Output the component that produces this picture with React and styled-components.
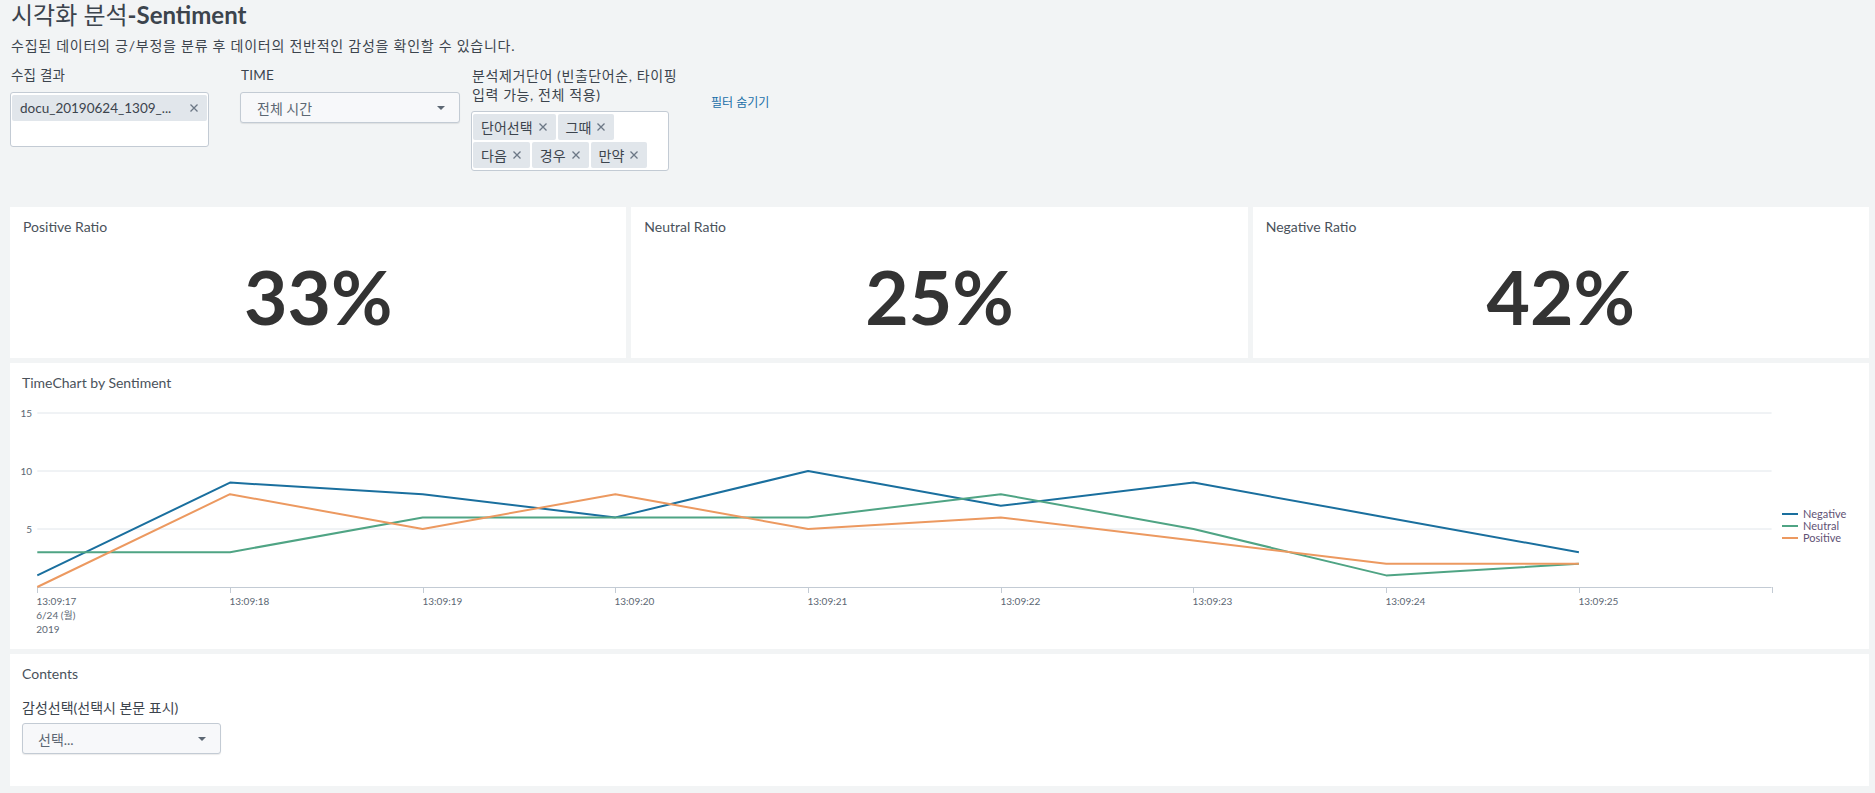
import React from "react";
import styled, { createGlobalStyle } from "styled-components";

const GlobalStyle = createGlobalStyle`
    html, body {
        margin: 0;
        padding: 0;
        background: #f2f4f5;
    }
    body {
        font-family: Lato, "Noto Sans CJK KR", sans-serif;
        color: #3c444d;
    }
`;

const times = [
    "13:09:17",
    "13:09:18",
    "13:09:19",
    "13:09:20",
    "13:09:21",
    "13:09:22",
    "13:09:23",
    "13:09:24",
    "13:09:25",
];

const series = [
    { name: "Negative", color: "#1a6f9e", values: [1, 9, 8, 6, 10, 7, 9, 6, 3] },
    { name: "Neutral", color: "#4fa484", values: [3, 3, 6, 6, 6, 8, 5, 1, 2] },
    { name: "Positive", color: "#ec9960", values: [0, 8, 5, 8, 5, 6, 4, 2, 2] },
];

const stats = [
    { title: "Positive Ratio", value: "33%" },
    { title: "Neutral Ratio", value: "25%" },
    { title: "Negative Ratio", value: "42%" },
];

const words = ["단어선택", "그때", "다음", "경우", "만약"];

// chart geometry (svg coords, svg starts 12px from panel edge)
const X0 = 25.3;
const STEP = 192.7;
const X_END = X0 + STEP * 9;
const yOf = (v) => 184 - v * 11.6;

const CloseIcon = () => (
    <svg width="10" height="10" viewBox="0 0 10 10">
        <path d="M1.5 1.5 L8.5 8.5 M8.5 1.5 L1.5 8.5" stroke="#6b7785" strokeWidth="1.3" fill="none" />
    </svg>
);

const TimeChart = () => (
    <svg width="1845" height="240" viewBox="0 0 1845 240">
        {[5, 10, 15].map((v) => (
            <g key={v}>
                <line x1={X0} x2={X_END} y1={yOf(v)} y2={yOf(v)} stroke="#e1e6eb" strokeWidth="1" />
                <AxisText x="20" y={yOf(v) + 3.5} textAnchor="end">
                    {v}
                </AxisText>
            </g>
        ))}
        <line x1={X0} x2={X_END} y1={184.5} y2={184.5} stroke="#c3cbd4" strokeWidth="1" />
        {times.concat([""]).map((t, i) => {
            const x = Math.round(X0 + STEP * i) + 0.5;
            return (
                <g key={i}>
                    <line x1={x} x2={x} y1={184} y2={190} stroke="#c3cbd4" strokeWidth="1" />
                    {t && (
                        <AxisText x={x - 1} y="202">
                            {t}
                        </AxisText>
                    )}
                </g>
            );
        })}
        <AxisText x={X0 - 1} y="216">
            6/24 (월)
        </AxisText>
        <AxisText x={X0 - 1} y="230">
            2019
        </AxisText>
        {series.map((s) => (
            <polyline
                key={s.name}
                fill="none"
                stroke={s.color}
                strokeWidth="2"
                strokeLinejoin="round"
                points={s.values.map((v, i) => `${X0 + STEP * i},${yOf(v)}`).join(" ")}
            />
        ))}
        {series.map((s, i) => (
            <g key={s.name}>
                <line x1="1770" x2="1786" y1={111 + i * 12} y2={111 + i * 12} stroke={s.color} strokeWidth="2" />
                <LegendText x="1791" y={115 + i * 12}>
                    {s.name}
                </LegendText>
            </g>
        ))}
    </svg>
);

export default function App() {
    return (
        <>
            <GlobalStyle />
            <Page>
                <Header>
                    <Title>
                        <span>시각화 분석</span>
                        <strong>-Sentiment</strong>
                    </Title>
                    <Description>수집된 데이터의 긍/부정을 분류 후 데이터의 전반적인 감성을 확인할 수 있습니다.</Description>
                </Header>

                <FilterRow>
                    <Field width={199}>
                        <Label>수집 결과</Label>
                        <MultiBox height={55}>
                            <Tag wide>
                                <span>docu_20190624_1309_...</span>
                                <CloseIcon />
                            </Tag>
                        </MultiBox>
                    </Field>
                    <Field width={220} gap={31}>
                        <Label>TIME</Label>
                        <Dropdown>
                            <span>전체 시간</span>
                            <Caret />
                        </Dropdown>
                    </Field>
                    <Field width={198} gap={11}>
                        <Label spaced>
                            분석제거단어 (빈출단어순, 타이핑
                            <br />
                            입력 가능, 전체 적용)
                        </Label>
                        <MultiBox height={60}>
                            {words.map((w) => (
                                <Tag key={w}>
                                    <span>{w}</span>
                                    <CloseIcon />
                                </Tag>
                            ))}
                        </MultiBox>
                    </Field>
                    <HideLink>필터 숨기기</HideLink>
                </FilterRow>

                <StatRow>
                    {stats.map((s) => (
                        <Panel key={s.title}>
                            <PanelTitle>{s.title}</PanelTitle>
                            <BigValue>{s.value}</BigValue>
                        </Panel>
                    ))}
                </StatRow>

                <ChartPanel>
                    <PanelTitle>TimeChart by Sentiment</PanelTitle>
                    <ChartWrap>
                        <TimeChart />
                    </ChartWrap>
                </ChartPanel>

                <ContentsPanel>
                    <PanelTitle>Contents</PanelTitle>
                    <ContentsLabel>감성선택(선택시 본문 표시)</ContentsLabel>
                    <Dropdown small>
                        <span>선택...</span>
                        <Caret />
                    </Dropdown>
                </ContentsPanel>
            </Page>
        </>
    );
}

const Page = styled.div`
    padding: 0 6px 7px 10px;
    display: flex;
    flex-direction: column;
`;

const Header = styled.div`
    padding-left: 1px;
`;

const Title = styled.h2`
    margin: 0;
    font-size: 24px;
    line-height: 30px;
    font-weight: 400;
    color: #3c444d;
    strong {
        font-weight: 700;
    }
`;

const Description = styled.p`
    margin: 6px 0 0;
    font-size: 14px;
    line-height: 20px;
    letter-spacing: 0.75px;
    color: #3c444d;
`;

const FilterRow = styled.div`
    display: flex;
    align-items: flex-start;
    margin-top: 10px;
    height: 141px;
`;

const Field = styled.div`
    width: ${(p) => p.width}px;
    margin-left: ${(p) => p.gap || 0}px;
    display: flex;
    flex-direction: column;
    flex-shrink: 0;
`;

const Label = styled.div`
    font-size: ${(p) => (p.spaced ? "14px" : "13.5px")};
    letter-spacing: ${(p) => (p.spaced ? "0.6px" : "0.2px")};
    line-height: 19px;
    color: #3c444d;
    margin-bottom: 7px;
    padding-left: 1px;
    white-space: nowrap;
`;

const MultiBox = styled.div`
    box-sizing: border-box;
    height: ${(p) => p.height}px;
    background: #fff;
    border: 1px solid #c3cbd4;
    border-radius: 3px;
    padding: 2px 1px;
    display: flex;
    flex-wrap: wrap;
    align-content: flex-start;
    gap: 2px;
`;

const Tag = styled.div`
    box-sizing: border-box;
    height: 26px;
    ${(p) => (p.wide ? "width: 100%; justify-content: space-between; font-size: 13.5px;" : "font-size: 14px;")}
    display: flex;
    align-items: center;
    gap: 5px;
    padding: 0 8px 0 8px;
    background: #e1e6eb;
    border-radius: 2px;
    color: #3c444d;
`;

const Dropdown = styled.div`
    box-sizing: border-box;
    width: ${(p) => (p.small ? "199px" : "100%")};
    height: 31px;
    display: flex;
    align-items: center;
    justify-content: space-between;
    padding: 0 14px 0 ${(p) => (p.small ? "15px" : "16px")};
    background: #f7f8fa;
    border: 1px solid #c3cbd4;
    border-radius: 3px;
    box-shadow: 0 1px 1px rgba(0, 0, 0, 0.08);
    font-size: 14px;
    color: #5c6773;
`;

const Caret = styled.span`
    width: 0;
    height: 0;
    border-left: 4px solid transparent;
    border-right: 4px solid transparent;
    border-top: 4px solid #5c6773;
`;

const HideLink = styled.a`
    margin-left: 42px;
    margin-top: 29px;
    font-size: 12px;
    line-height: 16px;
    color: #1a6fa8;
    cursor: pointer;
    white-space: nowrap;
`;

const Panel = styled.div`
    background: #fff;
    box-sizing: border-box;
    padding: 10px 13px 0;
    display: flex;
    flex-direction: column;
`;

const StatRow = styled.div`
    display: grid;
    grid-template-columns: repeat(3, 1fr);
    gap: 5px;
    height: 151px;
`;

const PanelTitle = styled.div`
    font-size: 14px;
    line-height: 20px;
    font-weight: 400;
    color: #4a525b;
`;

const BigValue = styled.div`
    flex: 1;
    display: flex;
    align-items: center;
    justify-content: center;
    font-size: 75px;
    font-weight: 700;
    line-height: 1;
    color: #333;
    padding-bottom: 2px;
`;

const ChartPanel = styled(Panel)`
    margin-top: 5px;
    height: 286px;
    padding-left: 12px;
`;

const ChartWrap = styled.div`
    margin: 10px 0 0 -10px;
`;

const AxisText = styled.text`
    font-family: Lato, "Noto Sans CJK KR", sans-serif;
    font-size: 10px;
    fill: #5c6773;
`;

const LegendText = styled.text`
    font-family: Lato, sans-serif;
    font-size: 11px;
    fill: #5f5275;
`;

const ContentsPanel = styled(Panel)`
    margin-top: 5px;
    height: 132px;
    padding-left: 12px;
`;

const ContentsLabel = styled.div`
    margin-top: 14px;
    margin-bottom: 6px;
    font-size: 14px;
    line-height: 19px;
    color: #3c444d;
`;
